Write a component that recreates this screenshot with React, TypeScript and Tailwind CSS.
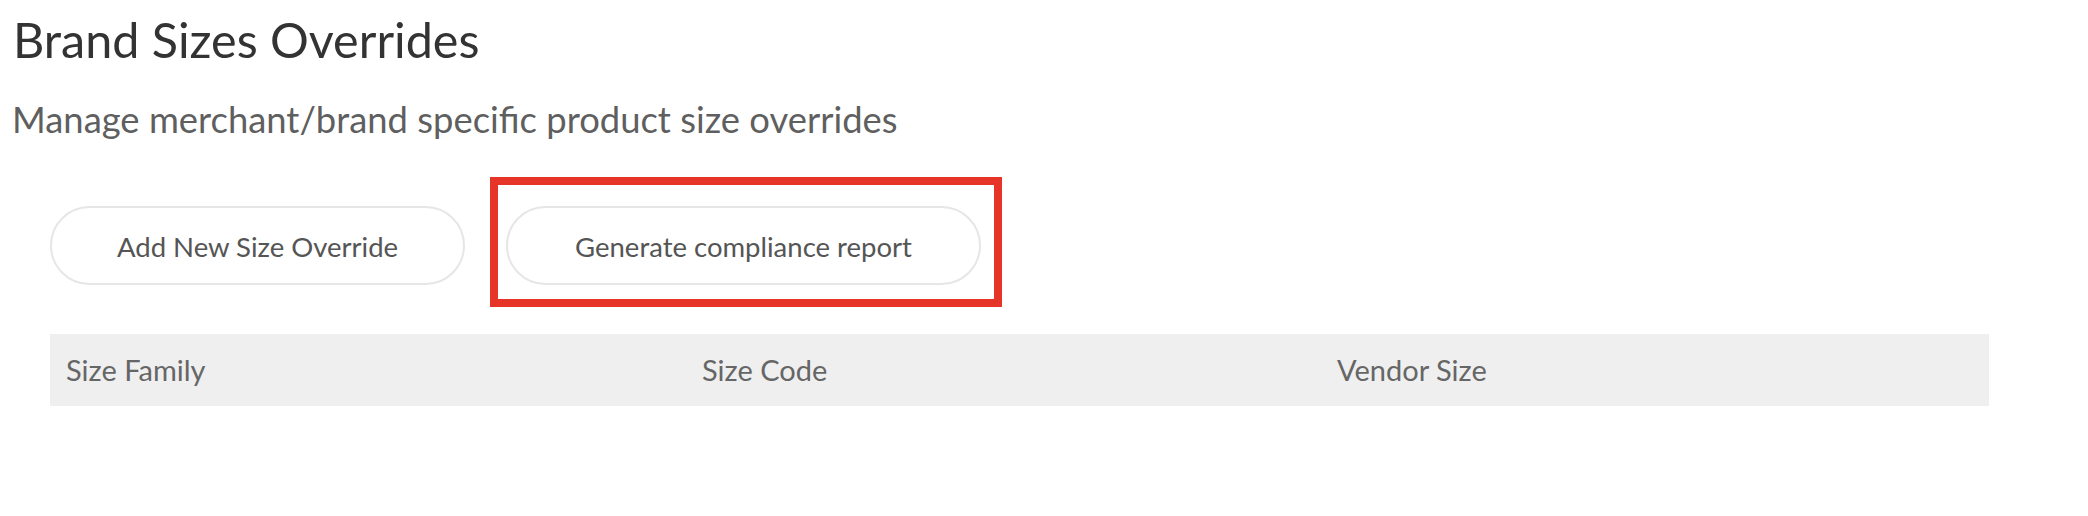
import React from "react";

export default function App() {
  return (
    <div className="min-h-[516px] w-[2088px] bg-white font-['Lato','Liberation_Sans',sans-serif]">
      <div className="pl-[12px] pt-[11px]">
        <h1 className="pl-[1px] text-[48.5px] font-normal leading-[56px] text-[#333333]">Brand Sizes Overrides</h1>
        <p className="mt-[30px] text-[36.4px] leading-[44px] text-[#5f5f5f]">
          Manage merchant/brand specific product size overrides
        </p>
      </div>
      <div className="ml-[50px] mt-[65px] flex gap-[41px]">
        <button className="h-[79px] w-[415px] rounded-full border-2 border-[#e6e6e6] bg-white pt-[2px] text-[27.5px] text-[#555555]">
          Add New Size Override
        </button>
        <div className="relative">
          <button className="h-[79px] w-[475px] rounded-full border-2 border-[#e6e6e6] bg-white pt-[2px] text-[27.5px] text-[#555555]">
            Generate compliance report
          </button>
          <div className="pointer-events-none absolute left-[-16px] top-[-29px] h-[130px] w-[512px] border-[8px] border-[#e63428]" />
        </div>
      </div>
      <div className="ml-[50px] mt-[49px] grid h-[72px] w-[1939px] grid-cols-[636px_635px_635px_1fr] items-center bg-[#efefef] text-[29px] text-[#666666]">
        <div className="pl-[16px]">Size Family</div>
        <div className="pl-[16px]">Size Code</div>
        <div className="pl-[16px]">Vendor Size</div>
        <div />
      </div>
    </div>
  );
}
